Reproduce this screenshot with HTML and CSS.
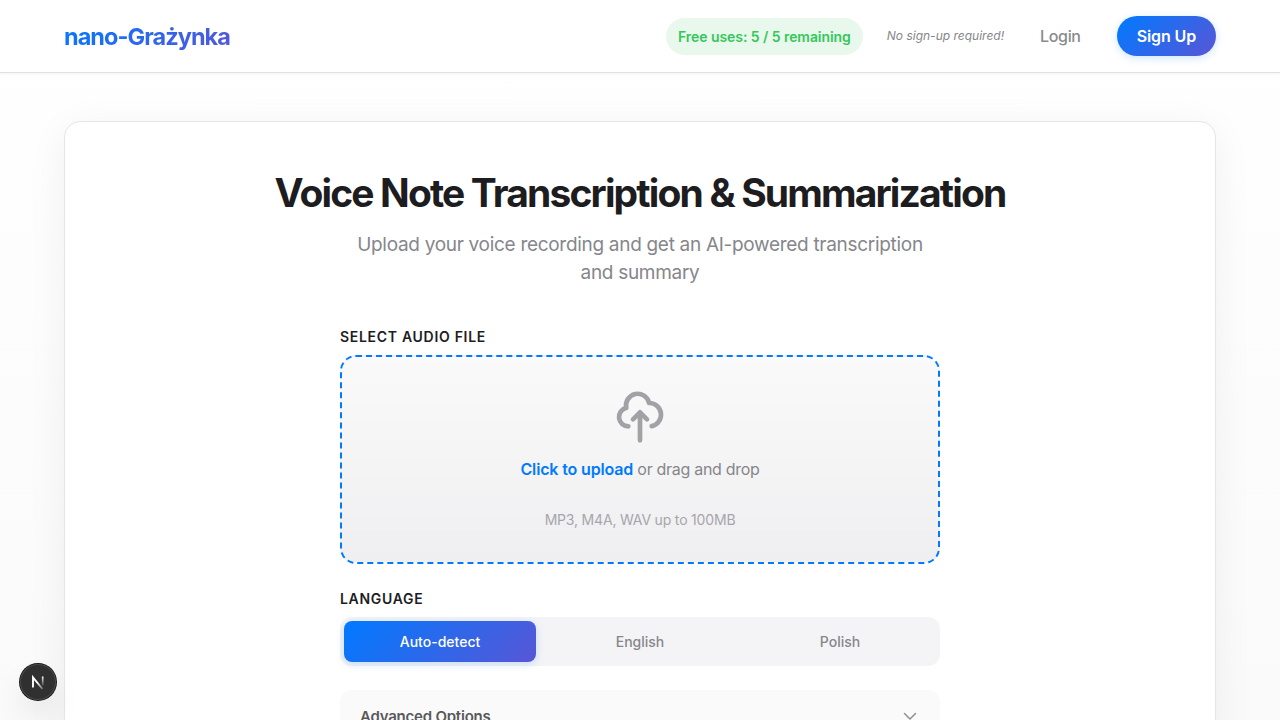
FILE: index.html
```html
<!DOCTYPE html>
<html lang="en">
<head>
<meta charset="utf-8">
<title>nano-Grażynka</title>
<link rel="stylesheet" href="styles.css">
</head>
<body>
<header class="header">
  <a class="logo">nano-Grażynka</a>
  <nav class="nav">
    <span class="uses">Free uses: 5 / 5 remaining</span>
    <span class="note">No sign-up required!</span>
    <a class="login">Login</a>
    <a class="signup">Sign Up</a>
  </nav>
</header>
<main class="main">
  <section class="card">
    <h1 class="title">Voice Note Transcription &amp; Summarization</h1>
    <p class="subtitle">Upload your voice recording and get an AI-powered transcription and summary</p>
    <form class="form">
      <div class="field">
        <span class="label">Select audio file</span>
        <div class="dropzone">
          <svg class="upload-icon" viewBox="0 0 24 24" fill="none" stroke="currentColor" stroke-width="2" stroke-linecap="round" stroke-linejoin="round"><path d="M7 16a4 4 0 01-.88-7.903A5 5 0 1115.9 6L16 6a5 5 0 011 9.9M15 13l-3-3m0 0l-3 3m3-3v12"/></svg>
          <p class="prompt"><span class="prompt-action">Click to upload</span> or drag and drop</p>
          <p class="hint">MP3, M4A, WAV up to 100MB</p>
        </div>
      </div>
      <div class="field">
        <span class="label">Language</span>
        <div class="segments">
          <span class="segment segment-active">Auto-detect</span>
          <span class="segment">English</span>
          <span class="segment">Polish</span>
        </div>
      </div>
      <div class="advanced">
        <span>Advanced Options</span>
        <svg class="chevron" viewBox="0 0 20 20" fill="none" stroke="currentColor" stroke-width="1.5" stroke-linecap="round" stroke-linejoin="round"><path d="M4.500 6.500L10 12l5.500-5.500"/></svg>
      </div>
    </form>
  </section>
</main>
<div class="dev-badge">
  <svg class="dev-icon" viewBox="0 0 36 36" fill="none">
    <defs>
      <linearGradient id="diag" gradientUnits="userSpaceOnUse" x1="18" y1="18" x2="24" y2="25"><stop stop-color="#fff"/><stop offset="1" stop-color="#fff" stop-opacity="0.2"/></linearGradient>
      <linearGradient id="stem" gradientUnits="userSpaceOnUse" x1="22.700" y1="12" x2="22.700" y2="23"><stop stop-color="#fff"/><stop offset="1" stop-color="#fff" stop-opacity="0"/></linearGradient>
    </defs>
    <path d="M13 23.500V13.500L22.500 25" stroke="url(#diag)" stroke-width="1.900"/>
    <path d="M22.700 12.500v9" stroke="url(#stem)" stroke-width="1.700"/>
  </svg>
</div>
</body>
</html>
```
FILE: styles.css
```css
* { box-sizing: border-box; }
body {
  margin: 0;
  height: 720px;
  overflow: hidden;
  font-family: Inter, "Liberation Sans", sans-serif;
  color: #1d1d1f;
  background: linear-gradient(180deg, #fff 0%, #fafafa 100%);
}
.header {
  height: 73px;
  padding: 0 64px;
  display: flex;
  align-items: center;
  justify-content: space-between;
  background: #fff;
  border-bottom: 1px solid #e2e2e4;
  box-shadow: 0 1px 2px rgba(0, 0, 0, 0.05);
}
.logo {
  padding-top: 2px;
  font-size: 23.5px;
  font-weight: 700;
  line-height: 36px;
  letter-spacing: -0.95px;
  background: linear-gradient(135deg, #007aff, #5856d6);
  -webkit-background-clip: text;
  background-clip: text;
  color: transparent;
}
.nav { display: flex; align-items: center; }
.uses {
  padding: 8px 12px;
  border-radius: 20px;
  background: #e9f8ed;
  color: #34c759;
  font-size: 14px;
  font-weight: 600;
  line-height: 21px;
  letter-spacing: -0.06px;
}
.note {
  margin-left: 24px;
  color: #86868b;
  font-size: 12px;
  font-style: italic;
  line-height: 18px;
}
.login {
  margin-left: 36px;
  color: #8a8a8e;
  font-size: 16px;
  font-weight: 500;
  letter-spacing: -0.35px;
}
.signup {
  margin-left: 36px;
  padding: 8px 20px;
  border-radius: 20px;
  background: linear-gradient(135deg, #007aff, #5856d6);
  box-shadow: 0 2px 8px rgba(0, 122, 255, 0.2);
  color: #fff;
  font-size: 16px;
  font-weight: 600;
  line-height: 24px;
  letter-spacing: -0.12px;
}
.main { padding: 48px 64px; }
.card {
  height: 900px;
  padding: 48px;
  background: #fff;
  border: 1px solid #e5e5ea;
  border-radius: 16px;
  box-shadow: 0 8px 40px rgba(0, 0, 0, 0.06);
}
.title {
  margin: 0 0 14px;
  text-align: center;
  font-size: 39px;
  font-weight: 700;
  line-height: 46px;
  letter-spacing: -1.85px;
}
.subtitle {
  width: 600px;
  margin: 0 auto 39px;
  padding-top: 1px;
  text-align: center;
  color: #86868b;
  font-size: 19px;
  line-height: 28px;
  letter-spacing: -0.3px;
}
.form {
  width: 600px;
  margin: 0 auto;
  display: flex;
  flex-direction: column;
  gap: 24px;
}
.field { display: flex; flex-direction: column; gap: 8px; }
.label {
  font-size: 14px;
  font-weight: 600;
  line-height: 21px;
  letter-spacing: 0.7px;
  text-transform: uppercase;
}
.dropzone {
  height: 209px;
  padding: 32px;
  display: flex;
  flex-direction: column;
  align-items: center;
  border: 2px dashed #007aff;
  border-radius: 16px;
  background: linear-gradient(180deg, #fafafa, #efeff1);
}
.upload-icon { width: 56px; height: 56px; color: #a1a1a6; }
.prompt { margin: 12px 0 28px; font-size: 16px; line-height: 24px; letter-spacing: -0.3px; color: #86868b; }
.prompt-action { color: #007aff; font-weight: 600; letter-spacing: -0.15px; }
.hint { margin: 0; font-size: 14px; line-height: 21px; letter-spacing: -0.18px; color: #a6a6aa; }
.segments {
  height: 49px;
  padding: 4px;
  display: grid;
  grid-template-columns: repeat(3, 1fr);
  gap: 8px;
  border-radius: 12px;
  background: #f4f4f6;
}
.segment {
  display: flex;
  align-items: center;
  justify-content: center;
  border-radius: 8px;
  color: #86868b;
  font-size: 14px;
  font-weight: 500;
}
.segment-active {
  background: linear-gradient(135deg, #007aff, #5856d6);
  box-shadow: 0 2px 8px rgba(0, 122, 255, 0.2);
  color: #fff;
}
.advanced {
  padding: 16px 20px;
  display: flex;
  align-items: center;
  justify-content: space-between;
  border-radius: 12px;
  background: #fafafa;
  color: #58585a;
  font-size: 15px;
  font-weight: 600;
  line-height: 22px;
  letter-spacing: -0.22px;
}
.chevron { width: 20px; height: 20px; color: #8e8e93; }
.dev-badge {
  position: fixed;
  left: 20px;
  bottom: 20px;
  width: 36px;
  height: 36px;
  border-radius: 50%;
  background: #303030;
  box-shadow: 0 0 0 1px #171717, inset 0 0 0 1px #4a4a4a, 0 16px 32px -8px rgba(0, 0, 0, 0.24);
}
.dev-icon { display: block; width: 36px; height: 36px; }
```
